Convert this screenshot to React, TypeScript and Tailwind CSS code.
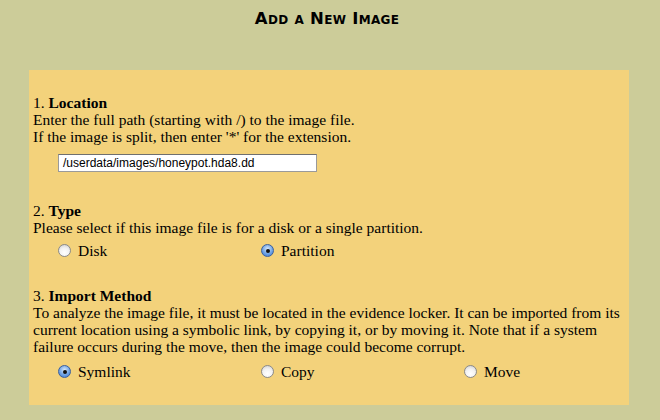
import React from "react";

const serif = "font-['Liberation_Serif',serif]";

function Radio({ checked, label }: { checked?: boolean; label: string }) {
  return (
    <label className="flex items-center gap-[7px]">
      {checked ? (
        <span className="flex h-[13px] w-[13px] items-center justify-center rounded-full border border-[#3a5f9e] bg-[radial-gradient(circle_at_50%_35%,#d6e8fb,#6fa3e4_55%,#3a77cf)]">
          <span className="h-[4px] w-[4px] rounded-full bg-[#111]" />
        </span>
      ) : (
        <span className="h-[13px] w-[13px] rounded-full border border-[#8a8a8a] bg-[radial-gradient(circle_at_50%_70%,#ffffff,#f2f2f2_50%,#c9c9c9)]" />
      )}
      <span>{label}</span>
    </label>
  );
}

export default function App() {
  return (
    <div className={`min-h-[420px] w-[660px] bg-[#cccc99] pt-[10px] text-black ${serif}`}>
      <h1 className="pr-[6px] text-center font-['DejaVu_Sans',sans-serif] text-[16.5px] font-bold leading-[18px] tracking-[0.3px] [font-variant:small-caps]">
        Add a New Image
      </h1>

      <div className="mx-[29px] mt-[42px] h-[335px] w-[600px] bg-[#f3d27b] px-[4px] pt-[24px] text-[15.5px] leading-[17px]">
        <p>
          1. <b>Location</b>
        </p>
        <p>Enter the full path (starting with /) to the image file.</p>
        <p>If the image is split, then enter '*' for the extension.</p>
        <div className="mt-[9px] pl-[25px]">
          <div className="flex h-[18px] w-[259px] items-center border border-[#9a9a9a] border-t-[#6f6f6f] bg-white pl-[4px] font-['Liberation_Sans',sans-serif] text-[12px]">
            /userdata/images/honeypot.hda8.dd
          </div>
        </div>

        <p className="mt-[30px]">
          2. <b>Type</b>
        </p>
        <p>Please select if this image file is for a disk or a single partition.</p>
        <div className="mt-[6px] grid grid-cols-[203px_203px_190px] pl-[25px]">
          <Radio label="Disk" />
          <Radio checked label="Partition" />
        </div>

        <p className="mt-[28px]">
          3. <b>Import Method</b>
        </p>
        <p className="max-w-[592px]">
          To analyze the image file, it must be located in the evidence locker. It can be imported from its
          current location using a symbolic link, by copying it, or by moving it. Note that if a system
          failure occurs during the move, then the image could become corrupt.
        </p>
        <div className="mt-[8px] grid grid-cols-[203px_203px_190px] pl-[25px]">
          <Radio checked label="Symlink" />
          <Radio label="Copy" />
          <Radio label="Move" />
        </div>
      </div>
    </div>
  );
}
